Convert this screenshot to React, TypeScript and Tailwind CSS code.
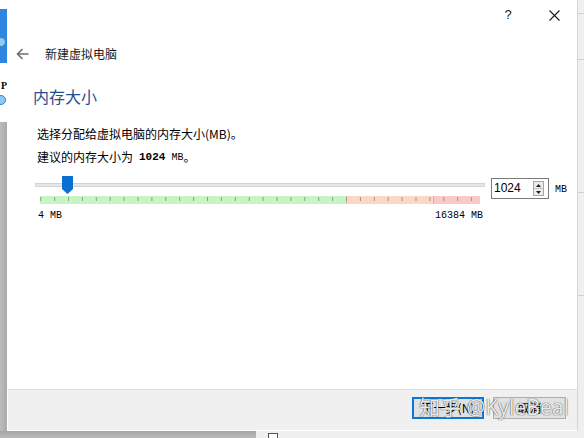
import * as React from 'react'

const cjk = "font-['Noto_Sans_CJK_SC','Noto_Sans',sans-serif]"
const mono = "font-['Liberation_Mono','Noto_Sans_CJK_SC',monospace]"

// 刻度位置
const ticks = Array.from({ length: 32 }, (_, i) => 0.7 + i * 13.9)

const BackArrow = () => (
  <svg width="13" height="12" viewBox="0 0 13 12" fill="none" stroke="#6f6f6f" strokeWidth="1.6">
    <path d="M12.5 6H1.5M6.5 1L1.5 6l5 5" />
  </svg>
)

const CloseIcon = () => (
  <svg width="11" height="11" viewBox="0 0 11 11" stroke="#1a1a1a" strokeWidth="1.1">
    <path d="M0.5 0.5l10 10M10.5 0.5l-10 10" />
  </svg>
)

const Thumb = () => (
  <svg width="11" height="18" viewBox="0 0 11 18">
    <path d="M0 0H11V13L5.5 18L0 13Z" fill="#0a6fd0" />
  </svg>
)

const TickBar = () => (
  <svg width="440" height="8" viewBox="0 0 440 8">
    <rect x="0" y="0" width="306" height="8" fill="#c6f4c2" />
    <rect x="306" y="0" width="87" height="8" fill="#fdd7c6" />
    <rect x="393" y="0" width="47" height="8" fill="#fcc9c9" />
    <line x1="306.5" y1="0" x2="306.5" y2="8" stroke="#e9b9a2" />
    <line x1="393.5" y1="0" x2="393.5" y2="8" stroke="#e4a9a9" />
    {ticks.map(x => (
      <line key={x} x1={x} y1="1" x2={x} y2="5" stroke="#8f9a8f" strokeWidth="1" />
    ))}
  </svg>
)

const Spinner = () => (
  <div className="w-[11px] h-[15px] my-[2px] mr-[4px] border border-[#a8a8a8] bg-[#ececec] flex flex-col">
    <div className="flex-1 flex items-center justify-center border-b border-[#c4c4c4]">
      <svg width="5" height="3" viewBox="0 0 5 3"><path d="M0 3L2.5 0L5 3Z" fill="#222" /></svg>
    </div>
    <div className="flex-1 flex items-center justify-center">
      <svg width="5" height="3" viewBox="0 0 5 3"><path d="M0 0L2.5 3L5 0Z" fill="#222" /></svg>
    </div>
  </div>
)

const App: React.FC = () => {
  return (
    <div className={`w-[584px] h-[438px] overflow-hidden flex flex-col bg-[#b7b7b7] ${cjk}`}>
      <div className="flex h-[431px]">
        {/* 左侧背景窗口 */}
        <div className="w-[7px] flex flex-col overflow-hidden">
          <div className="h-[9px] bg-white" />
          <div className="h-[54px] bg-[#2f86e0] relative">
            <div className="absolute left-[-4px] top-[28px] w-[10px] h-[10px] rounded-full bg-[#8fcaf3] border border-[#3b7fc0]" />
          </div>
          <div className="h-[59px] bg-white relative">
            <span className="absolute left-[1px] top-[18px] text-[10px] leading-none font-bold font-['Liberation_Serif',serif] text-black">P</span>
            <div className="absolute left-[-4px] top-[32px] w-[10px] h-[10px] rounded-full bg-[#8fcaf3] border border-[#3b7fc0]" />
          </div>
          <div className="flex-1 bg-gradient-to-r from-[#bdbdbd] to-[#a9a9a9]" />
        </div>

        {/* 对话框 */}
        <div className="w-[570px] bg-white flex flex-col">
          <div className="h-[30px] flex justify-end items-center">
            <div className="w-[46px] flex justify-center text-[13px] text-[#1a1a1a] font-['Liberation_Sans',sans-serif]">?</div>
            <div className="w-[46px] flex justify-center"><CloseIcon /></div>
          </div>

          <div className="h-[48px] flex items-center pl-[9px]">
            <BackArrow />
            <span className="ml-[16px] text-[12px] text-[#1a1a1a]">新建虚拟电脑</span>
          </div>

          <div className="h-[36px] flex items-center pl-[26px]">
            <span className="text-[16px] text-[#1f4f8f]">内存大小</span>
          </div>

          <div className="mt-[10px] h-[20px] flex items-center pl-[30px] text-[12px] text-black">
            选择分配给虚拟电脑的内存大小(MB)。
          </div>
          <div className="mt-[3px] h-[20px] flex items-center pl-[30px] text-[12px] text-black">
            建议的内存大小为<span className={`${mono} font-bold text-[11px] mx-[6px]`}>1024</span><span className={`${mono} text-[10px]`}>MB</span>。
          </div>

          <div className="mt-[9px] flex items-start pl-[28px]">
            <div className="w-[450px] flex flex-col">
              <div className="h-[20px] relative">
                <div className="absolute left-0 right-0 top-[7px] h-[4px] bg-[#e7e7e7] border border-[#d2d2d2]" />
                <div className="absolute left-[27px] top-0">
                  <Thumb />
                </div>
              </div>
              <div className="ml-[5px] h-[8px] flex">
                <TickBar />
              </div>
              <div className={`mt-[4px] ml-[3px] w-[445px] flex justify-between text-[10px] text-black ${mono}`}>
                <span>4 MB</span>
                <span>16384 MB</span>
              </div>
            </div>
            <div className="ml-[6px] mt-[2px] w-[58px] h-[21px] border border-[#7a7a7a] bg-white flex items-stretch">
              <span className="flex-1 pl-[2px] text-[12px] leading-[19px] text-black font-['Liberation_Sans',sans-serif]">1024</span>
              <Spinner />
            </div>
            <span className={`ml-[6px] mt-[6px] text-[10px] text-black ${mono}`}>MB</span>
          </div>

          {/* 底部按钮 */}
          <div className="mt-auto h-[42px] border-t border-[#dedede] border-b border-b-white border-l border-l-white bg-[#f0f0f0] flex justify-end items-start pt-[7px] pr-[11px] gap-[9px] relative">
            <button className="w-[72px] h-[22px] border-2 border-[#0a78d6] bg-[#e1e1e1] text-[12px] text-black leading-none">下一步(N)</button>
            <button className="w-[73px] h-[22px] border border-[#adadad] bg-[#e1e1e1] text-[12px] text-black leading-none">取消</button>
            <span className="absolute left-[411px] top-[3px] text-[21px] leading-[28px] text-white/90 [text-shadow:0_0_1px_rgba(0,0,0,0.7),0_0_1px_rgba(0,0,0,0.5)] font-['Noto_Sans','Noto_Sans_CJK_SC',sans-serif] whitespace-nowrap">知乎 @KyleBeal</span>
          </div>
        </div>

        {/* 右侧背景窗口 */}
        <div className="w-[7px] bg-[#efefef] border-l border-[#d6d6d6] flex flex-col overflow-hidden">
          <div className="h-[13px]" />
          <div className="h-px bg-[#cfcfcf]" />
          <div className="h-[45px]" />
          <div className="h-px bg-[#cfcfcf]" />
          <div className="h-[132px]" />
          <div className="h-px bg-[#cfcfcf]" />
          <div className="h-[102px]" />
          <div className="h-px bg-[#cfcfcf]" />
          <div className="flex-1" />
        </div>
      </div>

      {/* 底部阴影 */}
      <div className="h-[7px] flex">
        <div className="w-[256px] bg-gradient-to-b from-[#a6a6a6] to-[#b9b9b9]" />
        <div className="flex-1 bg-[#efefef] relative">
          <div className="absolute left-[12px] top-[2px] w-[10px] h-[10px] border border-[#555] bg-white" />
        </div>
      </div>
    </div>
  )
}

export default App
